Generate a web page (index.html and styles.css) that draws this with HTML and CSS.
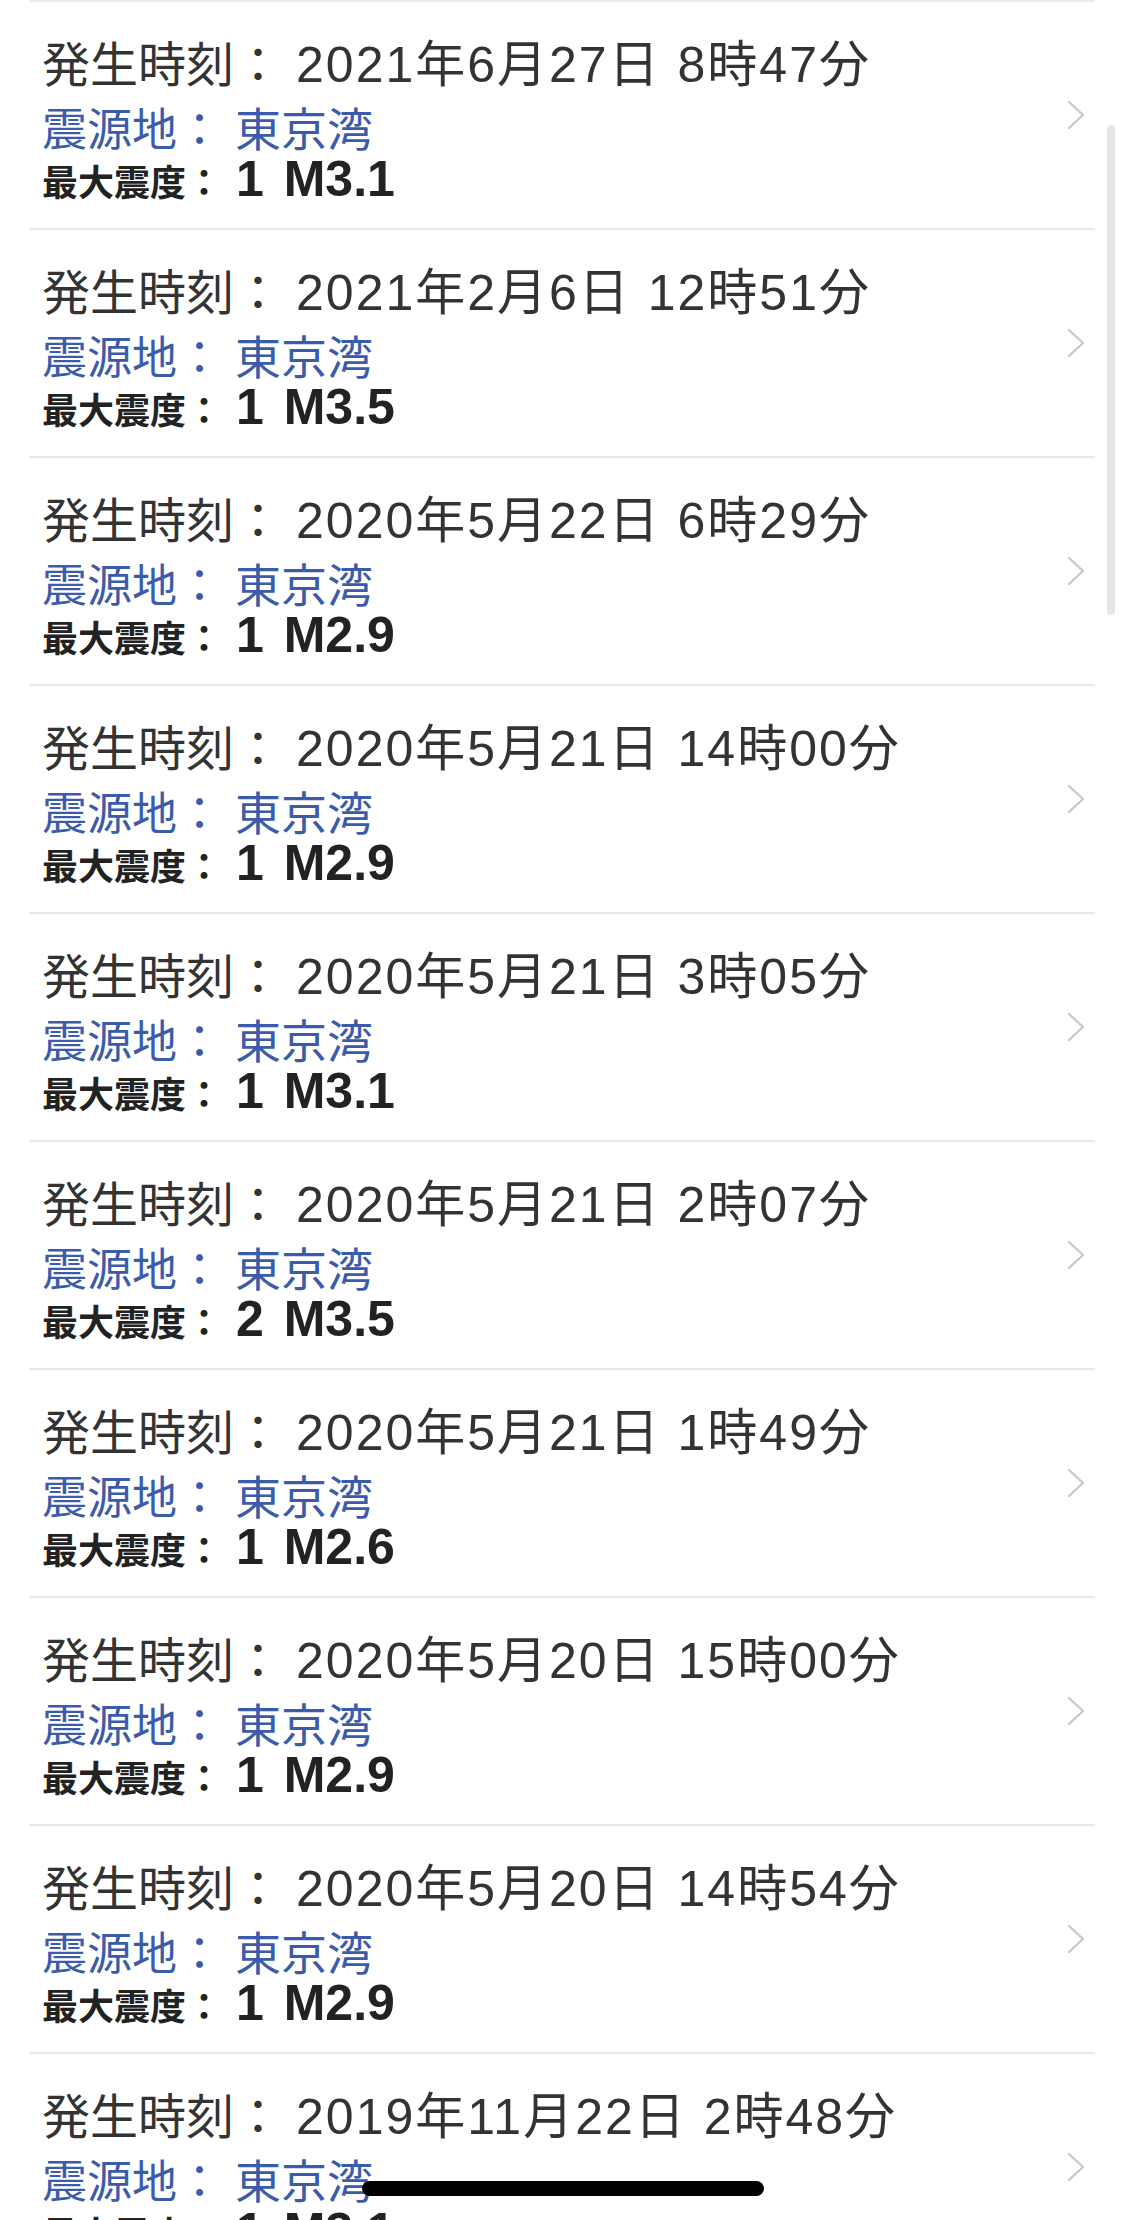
FILE: index.html
```html
<!DOCTYPE html>
<html>
<head>
    <title>地震履歴</title>
    <link rel="stylesheet" href="styles.css">
</head>
<body>
    <div class="screen">
        <ul class="quake-list">
            <li class="quake-item">
                <div class="info">
                    <div class="line time"><span class="label">発生時刻：</span><span class="value">2021年6月27日 8時47分</span></div>
                    <div class="line place"><span class="label">震源地：</span><span class="value">東京湾</span></div>
                    <div class="line scale"><span class="label">最大震度：</span><span class="value">1 M3.1</span></div>
                </div>
                <svg class="chevron" viewBox="0 0 18 30"><polyline points="2,2 16,15 2,28"/></svg>
            </li>
            <li class="quake-item">
                <div class="info">
                    <div class="line time"><span class="label">発生時刻：</span><span class="value">2021年2月6日 12時51分</span></div>
                    <div class="line place"><span class="label">震源地：</span><span class="value">東京湾</span></div>
                    <div class="line scale"><span class="label">最大震度：</span><span class="value">1 M3.5</span></div>
                </div>
                <svg class="chevron" viewBox="0 0 18 30"><polyline points="2,2 16,15 2,28"/></svg>
            </li>
            <li class="quake-item">
                <div class="info">
                    <div class="line time"><span class="label">発生時刻：</span><span class="value">2020年5月22日 6時29分</span></div>
                    <div class="line place"><span class="label">震源地：</span><span class="value">東京湾</span></div>
                    <div class="line scale"><span class="label">最大震度：</span><span class="value">1 M2.9</span></div>
                </div>
                <svg class="chevron" viewBox="0 0 18 30"><polyline points="2,2 16,15 2,28"/></svg>
            </li>
            <li class="quake-item">
                <div class="info">
                    <div class="line time"><span class="label">発生時刻：</span><span class="value">2020年5月21日 14時00分</span></div>
                    <div class="line place"><span class="label">震源地：</span><span class="value">東京湾</span></div>
                    <div class="line scale"><span class="label">最大震度：</span><span class="value">1 M2.9</span></div>
                </div>
                <svg class="chevron" viewBox="0 0 18 30"><polyline points="2,2 16,15 2,28"/></svg>
            </li>
            <li class="quake-item">
                <div class="info">
                    <div class="line time"><span class="label">発生時刻：</span><span class="value">2020年5月21日 3時05分</span></div>
                    <div class="line place"><span class="label">震源地：</span><span class="value">東京湾</span></div>
                    <div class="line scale"><span class="label">最大震度：</span><span class="value">1 M3.1</span></div>
                </div>
                <svg class="chevron" viewBox="0 0 18 30"><polyline points="2,2 16,15 2,28"/></svg>
            </li>
            <li class="quake-item">
                <div class="info">
                    <div class="line time"><span class="label">発生時刻：</span><span class="value">2020年5月21日 2時07分</span></div>
                    <div class="line place"><span class="label">震源地：</span><span class="value">東京湾</span></div>
                    <div class="line scale"><span class="label">最大震度：</span><span class="value">2 M3.5</span></div>
                </div>
                <svg class="chevron" viewBox="0 0 18 30"><polyline points="2,2 16,15 2,28"/></svg>
            </li>
            <li class="quake-item">
                <div class="info">
                    <div class="line time"><span class="label">発生時刻：</span><span class="value">2020年5月21日 1時49分</span></div>
                    <div class="line place"><span class="label">震源地：</span><span class="value">東京湾</span></div>
                    <div class="line scale"><span class="label">最大震度：</span><span class="value">1 M2.6</span></div>
                </div>
                <svg class="chevron" viewBox="0 0 18 30"><polyline points="2,2 16,15 2,28"/></svg>
            </li>
            <li class="quake-item">
                <div class="info">
                    <div class="line time"><span class="label">発生時刻：</span><span class="value">2020年5月20日 15時00分</span></div>
                    <div class="line place"><span class="label">震源地：</span><span class="value">東京湾</span></div>
                    <div class="line scale"><span class="label">最大震度：</span><span class="value">1 M2.9</span></div>
                </div>
                <svg class="chevron" viewBox="0 0 18 30"><polyline points="2,2 16,15 2,28"/></svg>
            </li>
            <li class="quake-item">
                <div class="info">
                    <div class="line time"><span class="label">発生時刻：</span><span class="value">2020年5月20日 14時54分</span></div>
                    <div class="line place"><span class="label">震源地：</span><span class="value">東京湾</span></div>
                    <div class="line scale"><span class="label">最大震度：</span><span class="value">1 M2.9</span></div>
                </div>
                <svg class="chevron" viewBox="0 0 18 30"><polyline points="2,2 16,15 2,28"/></svg>
            </li>
            <li class="quake-item">
                <div class="info">
                    <div class="line time"><span class="label">発生時刻：</span><span class="value">2019年11月22日 2時48分</span></div>
                    <div class="line place"><span class="label">震源地：</span><span class="value">東京湾</span></div>
                    <div class="line scale"><span class="label">最大震度：</span><span class="value">1 M3.1</span></div>
                </div>
                <svg class="chevron" viewBox="0 0 18 30"><polyline points="2,2 16,15 2,28"/></svg>
            </li>
        </ul>
        <div class="scrollbar"></div>
        <div class="home-indicator"></div>
    </div>
</body>
</html>
```
FILE: styles.css
```css
body {
    margin: 0;
    background-color: #fff;
    font-family: "Liberation Sans", "Noto Sans CJK JP", sans-serif;
}

.screen {
    position: relative;
    height: 2220px;
    overflow: hidden;
}

.quake-list {
    list-style: none;
    margin: 0 30px 0 29px;
    padding: 0;
    border-top: 2px solid #ebebeb;
}

.quake-item {
    display: flex;
    align-items: center;
    height: 226px;
    padding: 0 10px 0 13px;
    border-bottom: 2px solid #e8e8e8;
}

.info {
    flex: 1;
    align-self: flex-start;
    padding-top: 32px;
}

.line {
    white-space: nowrap;
}

/* 発生時刻 */
.time {
    height: 66px;
    font-size: 48px;
    line-height: 64px;
    color: #333;
}

.time .value {
    margin-left: 14px;
    font-size: 50px;
    line-height: 1;
    letter-spacing: 2px;
    word-spacing: 1px;
}

/* 震源地 */
.place {
    height: 58px;
    font-size: 45px;
    line-height: 62px;
    color: #3b5caa;
}

.place .value {
    margin-left: 13px;
    font-size: 46px;
    line-height: 1;
}

/* 最大震度 */
.scale {
    height: 52px;
    font-size: 36px;
    line-height: 52px;
    font-weight: bold;
    color: #222;
}

.scale .value {
    margin-left: 14px;
    font-size: 50px;
    line-height: 40px;
    word-spacing: 6px;
}

.chevron {
    width: 18px;
    height: 30px;
    flex-shrink: 0;
}

.chevron polyline {
    fill: none;
    stroke: #c7c7cc;
    stroke-width: 2.2;
    stroke-linecap: round;
    stroke-linejoin: round;
}

.scrollbar {
    position: absolute;
    top: 125px;
    left: 1107px;
    width: 8px;
    height: 490px;
    border-radius: 4px;
    background-color: #e6e6e6;
}

.home-indicator {
    position: absolute;
    bottom: 24px;
    left: 362px;
    width: 402px;
    height: 15px;
    border-radius: 8px;
    background-color: #000;
}
```
